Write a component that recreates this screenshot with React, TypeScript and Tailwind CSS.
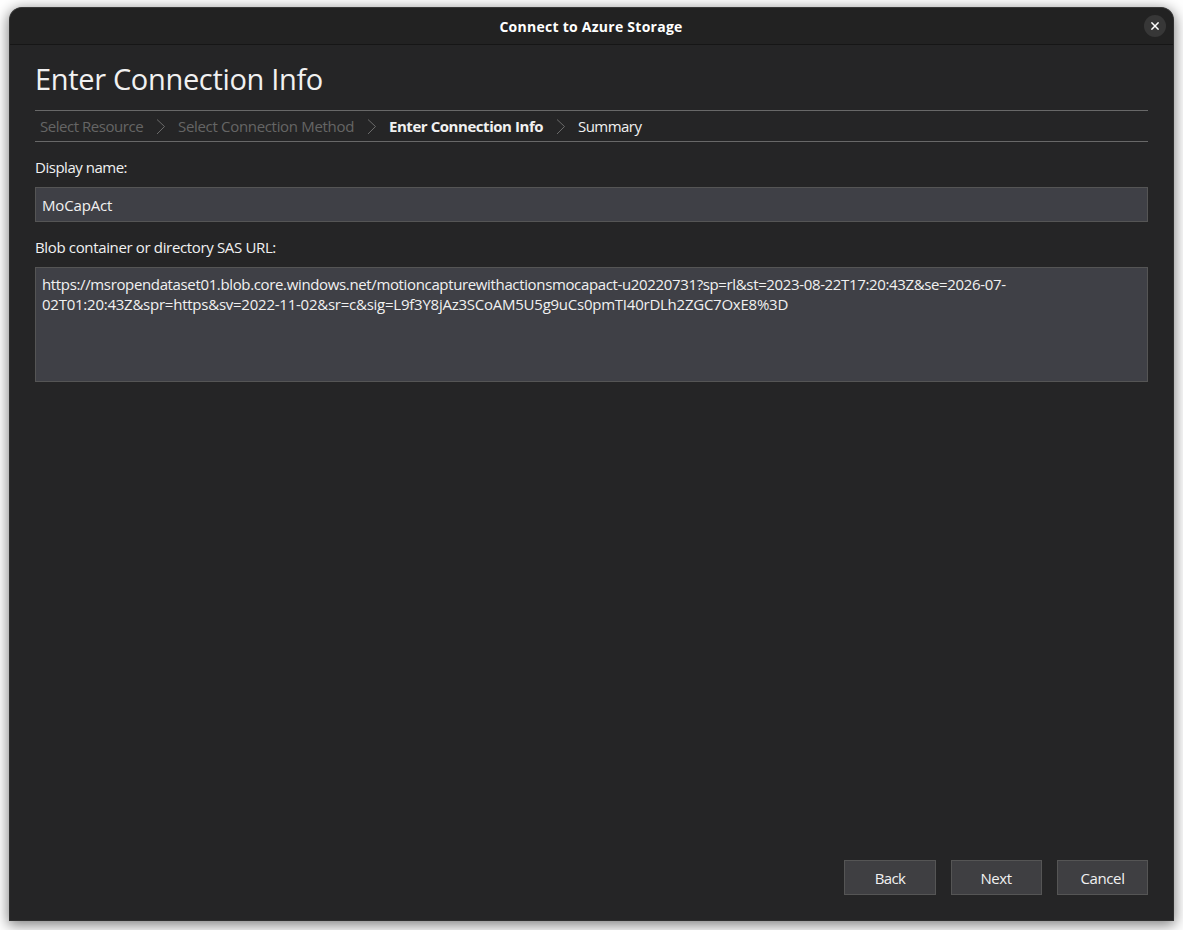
import type { ReactNode } from "react";

function Separator() {
  return (
    <svg width="10" height="16" viewBox="0 0 10 16" fill="none" stroke="#6a6a6a" strokeWidth="1" className="mt-px shrink-0">
      <path d="M1 0.5 L8.5 7.5 L1 15" />
    </svg>
  );
}

function Button({ children, className }: { children: ReactNode; className: string }) {
  return (
    <button className={`flex h-[35px] items-center justify-center border border-[#555555] bg-[#3f3f42] pt-[2px] ${className}`}>
      {children}
    </button>
  );
}

export default function App() {
  return (
    <div className="h-[930px] w-[1183px] overflow-hidden bg-white pt-[7px] pl-[9px] font-['Open_Sans',sans-serif] text-[15px] text-[#f1f1f1]">
      <div className="flex h-[914px] w-[1165px] flex-col rounded-t-[13px] border border-[#303030] border-t-[#383838] bg-[#252526] shadow-[0_3px_14px_1px_rgba(0,0,0,0.5)]">
        <header className="grid h-[37px] shrink-0 grid-cols-[1fr_auto_1fr] items-center rounded-t-[12px] border-b border-[#161616] bg-[#222222] pr-[7px]">
          <h1 className="col-start-2 pt-[2px] pl-[6px] text-[14px] leading-5 font-bold tracking-[0.26px] text-white">
            Connect to Azure Storage
          </h1>
          <button aria-label="Close" className="flex size-[22px] items-center justify-center justify-self-end rounded-full bg-[#373737]">
            <svg width="8" height="8" viewBox="0 0 8 8" stroke="#ffffff" strokeWidth="1.5">
              <path d="M0.4 0.4 L7.6 7.6 M7.6 0.4 L0.4 7.6" />
            </svg>
          </button>
        </header>

        <main className="flex flex-1 flex-col px-[25px] pb-[25px]">
          <h2 className="h-[65px] pt-[14px] text-[29px] leading-10 tracking-[-0.33px]">Enter Connection Info</h2>

          <nav className="flex h-8 items-center border-y border-[#686868] pl-[5px] leading-5 whitespace-nowrap">
            <span className="w-[116px] tracking-[-0.46px] text-[#656565]">Select Resource</span>
            <Separator />
            <span className="ml-[12px] w-[189px] tracking-[-0.32px] text-[#656565]">Select Connection Method</span>
            <Separator />
            <span className="ml-[12px] w-[167px] font-bold tracking-[-0.45px]">Enter Connection Info</span>
            <Separator />
            <span className="ml-[12px] tracking-[-0.54px]">Summary</span>
          </nav>

          <label className="mt-[15px] h-[30px] leading-5 tracking-[-0.48px]">Display name:</label>
          <div className="flex h-[35px] items-center border border-[#555555] bg-[#3f4046] px-[6px] pt-[2px] tracking-[-0.16px]">
            MoCapAct
          </div>

          <label className="mt-[15px] h-[30px] leading-5 tracking-[-0.35px]">Blob container or directory SAS URL:</label>
          <div className="h-[115px] border border-[#555555] bg-[#3f4046] px-[6px] pt-[6px] leading-5 whitespace-nowrap">
            <p className="tracking-[-0.356px]">
              https://msropendataset01.blob.core.windows.net/motioncapturewithactionsmocapact-u20220731?sp=rl&amp;st=2023-08-22T17:20:43Z&amp;se=2026-07-
            </p>
            <p className="tracking-[-0.242px]">
              02T01:20:43Z&amp;spr=https&amp;sv=2022-11-02&amp;sr=c&amp;sig=L9f3Y8jAz3SCoAM5U5g9uCs0pmTI40rDLh2ZGC7OxE8%3D
            </p>
          </div>

          <footer className="mt-auto flex justify-end gap-[15px]">
            <Button className="w-[92px] tracking-[-0.6px]">Back</Button>
            <Button className="w-[91px] pr-px tracking-[-0.45px]">Next</Button>
            <Button className="w-[91px] tracking-[-0.38px]">Cancel</Button>
          </footer>
        </main>
      </div>
    </div>
  );
}
